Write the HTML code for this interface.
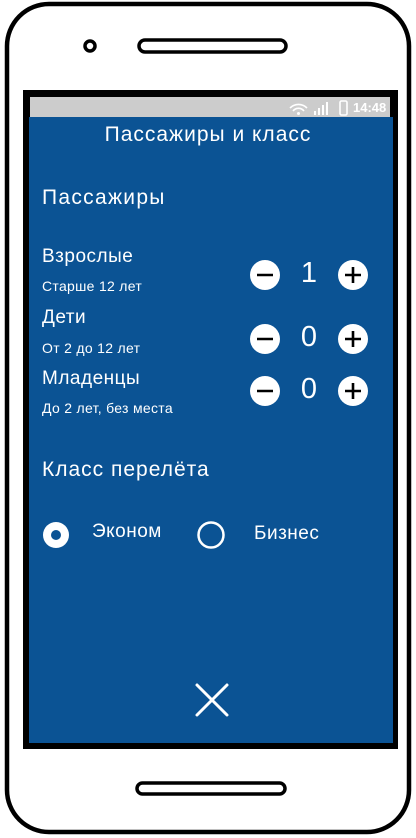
<!DOCTYPE html>
<html><head><meta charset="utf-8"><style>
body{margin:0;width:416px;height:838px;background:#fff;position:relative;overflow:hidden;font-family:"Liberation Sans","Noto Sans CJK SC",sans-serif;color:#fff}
.t{position:absolute;white-space:nowrap;color:#fff}
.b{position:absolute;width:30px;height:30px;border-radius:50%;background:#fff}
.n{position:absolute;font-size:29px;font-weight:300;width:40px;text-align:center;color:#fff}
</style></head><body>
<svg width="416" height="838" style="position:absolute;left:0;top:0">
<rect x="7" y="4" width="402" height="828" rx="42" fill="#fff" stroke="#000" stroke-width="4.5"/>
<circle cx="90" cy="46" r="5" fill="none" stroke="#000" stroke-width="3.5"/>
<rect x="139" y="40" width="147" height="12" rx="6" fill="none" stroke="#000" stroke-width="3.5"/>
<rect x="137" y="783" width="148" height="11" rx="5.5" fill="none" stroke="#000" stroke-width="3.5"/>
<rect x="23" y="90" width="375" height="659" fill="#000"/>
<rect x="30" y="97" width="360" height="20" fill="#ccc"/>
<rect x="29" y="117" width="364" height="626" fill="#0b5394"/>
<g fill="none" stroke="#fff" stroke-width="1.6">
<path d="M290 108a12 12 0 0 1 17 0M293 111a7 7 0 0 1 11 0"/>
</g>
<circle cx="298.5" cy="113.5" r="1.5" fill="#fff"/>
<g fill="#fff"><rect x="314" y="111" width="2" height="4"/><rect x="318" y="108" width="2" height="7"/><rect x="322" y="105" width="2" height="10"/><rect x="326" y="102" width="2" height="13"/></g>
<rect x="340" y="101" width="7" height="14" rx="1.5" fill="none" stroke="#fff" stroke-width="1.6"/>
<path d="M197 685l30 30M227 685l-30 30" stroke="#fff" stroke-width="3" stroke-linecap="round"/>
<circle cx="56" cy="535" r="13" fill="#fff"/><circle cx="56" cy="535" r="5" fill="#0b5394"/>
<circle cx="211" cy="535" r="12.5" fill="none" stroke="#fff" stroke-width="2.5"/>
</svg>
<div class="t" style="left:353px;top:100px;font-size:13px;font-weight:bold">14:48</div>
<div class="t" style="left:0;width:416px;text-align:center;top:123px;font-size:21px;letter-spacing:1px">Пассажиры и класс</div>
<div class="t" style="left:42px;top:186px;font-size:21px;letter-spacing:1.3px">Пассажиры</div>
<div class="t" style="left:42px;top:246px;font-size:19px;letter-spacing:0.5px">Взрослые</div>
<div class="t" style="left:42px;top:278px;font-size:14px;letter-spacing:0.3px">Старше 12 лет</div>
<div class="t" style="left:42px;top:307px;font-size:19px;letter-spacing:0.5px">Дети</div>
<div class="t" style="left:42px;top:340px;font-size:14px;letter-spacing:0.3px">От 2 до 12 лет</div>
<div class="t" style="left:42px;top:368px;font-size:19px;letter-spacing:0.5px">Младенцы</div>
<div class="t" style="left:42px;top:400px;font-size:14px;letter-spacing:0.3px">До 2 лет, без места</div>
<div class="t" style="left:42px;top:458px;font-size:21px;letter-spacing:1px">Класс перелёта</div>
<div class="t" style="left:92px;top:521px;font-size:19px;letter-spacing:0.5px">Эконом</div>
<div class="t" style="left:254px;top:523px;font-size:19px;letter-spacing:0.5px">Бизнес</div>
<div class="b" style="left:250px;top:260px"></div><div class="b" style="left:338px;top:260px"></div>
<div class="b" style="left:250px;top:324px"></div><div class="b" style="left:338px;top:324px"></div>
<div class="b" style="left:250px;top:376px"></div><div class="b" style="left:338px;top:376px"></div>
<svg width="416" height="838" style="position:absolute;left:0;top:0" stroke="#000" stroke-width="2.6">
<path d="M257 275h16M345 275h16M353 267v16"/>
<path d="M257 339h16M345 339h16M353 331v16"/>
<path d="M257 391h16M345 391h16M353 383v16"/>
</svg>
<div class="n" style="left:289px;top:257px">1</div>
<div class="n" style="left:289px;top:321px">0</div>
<div class="n" style="left:289px;top:373px">0</div>
</body></html>
